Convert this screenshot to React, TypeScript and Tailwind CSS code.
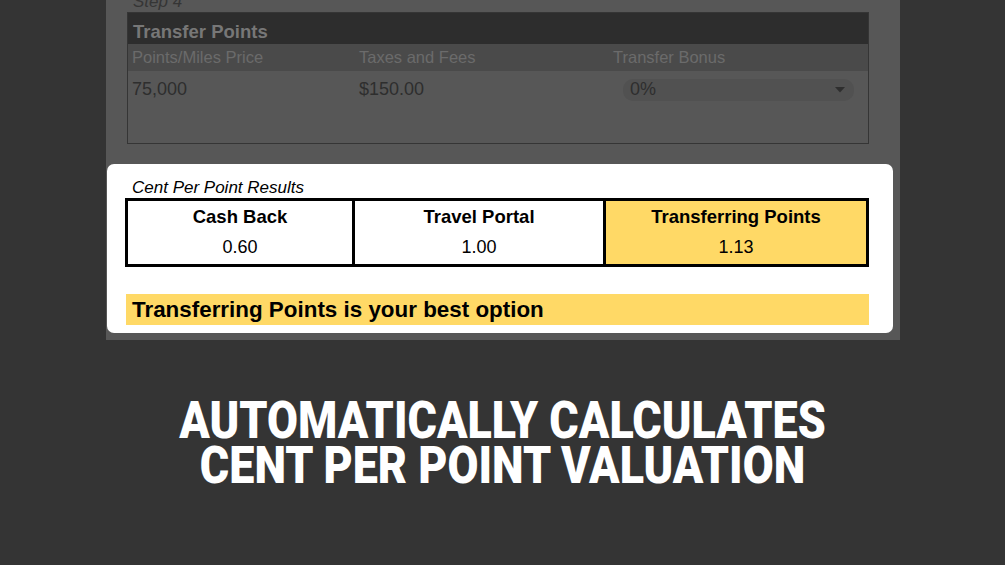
import React from 'react';

const cols = [
  { label: 'Cash Back', value: '0.60', w: 'w-[224px]', best: false },
  { label: 'Travel Portal', value: '1.00', w: 'w-[251px]', best: false },
  { label: 'Transferring Points', value: '1.13', w: 'flex-1', best: true },
];

const App = () => {
  return (
    <div className="w-[1005px] h-[565px] overflow-hidden bg-[#343434] font-['Liberation_Sans',Arial,sans-serif]">
      {/* dimmed spreadsheet panel */}
      <div className="ml-[106px] w-[794px] h-[340px] bg-[#575757] pt-[12px] relative">
        <div className="absolute left-[27px] -top-[7px] text-[17px] italic text-[#353535] leading-none">Step 4</div>
        <div className="ml-[21px] w-[742px] h-[132px] border border-[#353535] flex flex-col">
          <div className="h-[31px] bg-[#2d2d2d] pl-[5px] pt-[9px] text-[18.5px] leading-[20px] font-bold text-[#777777]">
            Transfer Points
          </div>
          <div className="h-[27px] bg-[#4a4a4a] flex items-center text-[16.5px] text-[#6b6b6b]">
            <div className="w-[227px] pl-[4px]">Points/Miles Price</div>
            <div className="w-[254px] pl-[4px]">Taxes and Fees</div>
            <div className="pl-[4px]">Transfer Bonus</div>
          </div>
          <div className="flex items-center h-[37px] text-[18px] text-[#2e2e2e]">
            <div className="w-[227px] pl-[4px]">75,000</div>
            <div className="w-[254px] pl-[4px]">$150.00</div>
            <div className="ml-[14px] w-[231px] h-[22px] rounded-[10px] bg-[#515151] flex items-center justify-between pl-[7px] pr-[9px]">
              <span>0%</span>
              <svg width="10" height="6" viewBox="0 0 10 6">
                <path d="M0 0 L10 0 L5 5.5 Z" fill="#2e2e2e" />
              </svg>
            </div>
          </div>
        </div>

        {/* results card */}
        <div className="mt-[20px] ml-px w-[786px] h-[169px] bg-white rounded-[7px] pt-[14px] px-[18px]">
          <div className="pl-[7px] text-[17px] italic text-black leading-[20px]">Cent Per Point Results</div>
          <div className="flex w-[744px] h-[69px] border-[3px] border-black">
            {cols.map((c, i) => (
              <div
                key={c.label}
                className={`${c.w} flex flex-col items-center pt-[3px] ${i > 0 ? 'border-l-[3px] border-black' : ''} ${c.best ? 'bg-[#ffd966]' : 'bg-white'}`}
              >
                <div className="text-[18.5px] font-bold text-black leading-[26px]">{c.label}</div>
                <div className="text-[18px] text-black leading-[34px]">{c.value}</div>
              </div>
            ))}
          </div>
          <div className="mt-[27px] ml-px w-[743px] h-[31px] bg-[#ffd966] pl-[6px] flex items-center text-[22.4px] font-bold text-black">
            Transferring Points is your best option
          </div>
        </div>
      </div>

      <div className="mt-[58px] text-center text-white font-['Roboto',sans-serif] font-black text-[51px] leading-[45px] scale-x-[0.88]">
        <div>AUTOMATICALLY CALCULATES</div>
        <div>CENT PER POINT VALUATION</div>
      </div>
    </div>
  );
};

export default App;
